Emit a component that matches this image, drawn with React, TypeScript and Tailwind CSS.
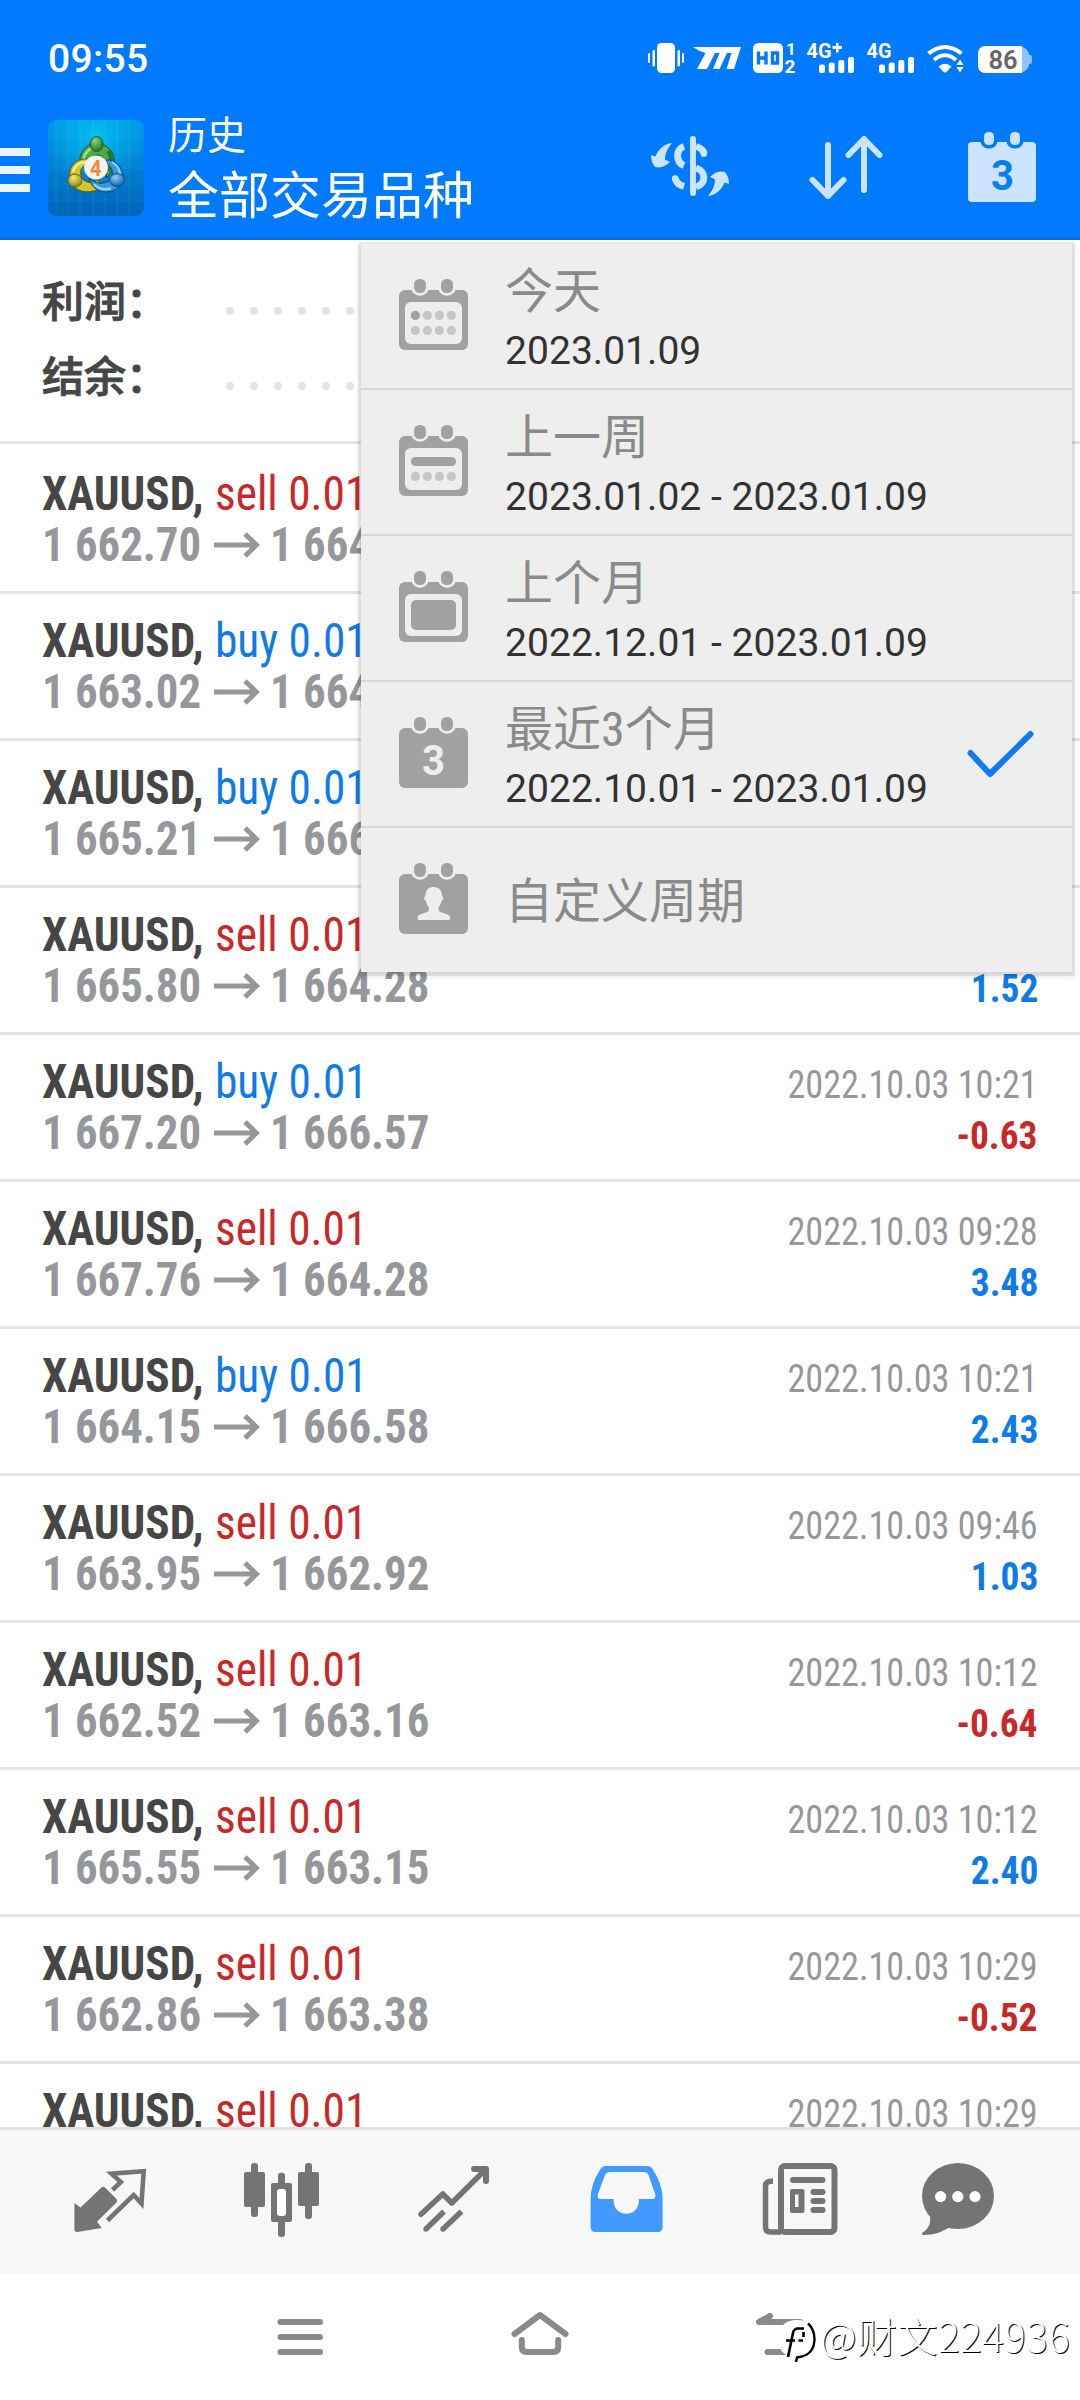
import React from "react";

const CJK = "font-[Roboto,'Noto_Sans_CJK_SC',sans-serif]";

type Trade = {
  side: "sell" | "buy";
  from?: string;
  to?: string;
  time?: string;
  profit?: string;
};

const trades: Trade[] = [
  { side: "sell", from: "1 662.70", to: "1 664" },
  { side: "buy", from: "1 663.02", to: "1 664" },
  { side: "buy", from: "1 665.21", to: "1 666" },
  { side: "sell", from: "1 665.80", to: "1 664.28", profit: "1.52" },
  { side: "buy", from: "1 667.20", to: "1 666.57", time: "2022.10.03 10:21", profit: "-0.63" },
  { side: "sell", from: "1 667.76", to: "1 664.28", time: "2022.10.03 09:28", profit: "3.48" },
  { side: "buy", from: "1 664.15", to: "1 666.58", time: "2022.10.03 10:21", profit: "2.43" },
  { side: "sell", from: "1 663.95", to: "1 662.92", time: "2022.10.03 09:46", profit: "1.03" },
  { side: "sell", from: "1 662.52", to: "1 663.16", time: "2022.10.03 10:12", profit: "-0.64" },
  { side: "sell", from: "1 665.55", to: "1 663.15", time: "2022.10.03 10:12", profit: "2.40" },
  { side: "sell", from: "1 662.86", to: "1 663.38", time: "2022.10.03 10:29", profit: "-0.52" },
  { side: "sell", time: "2022.10.03 10:29" },
];

function StatusBar() {
  return (
    <div className="flex h-[84px] items-start pl-12 pr-[45px]">
      <div className="mt-[36px] text-[39px] font-medium leading-[46px] tracking-[0.3px] text-white">09:55</div>
      <svg className="ml-auto mt-[34px] h-[48px] w-[390px]" viewBox="645 34 390 48" fill="#fff">
        <rect x="657" y="43" width="18" height="30" rx="4.5" />
        <rect x="648" y="53" width="2" height="10" rx="1" />
        <rect x="652.5" y="50" width="2.5" height="16.5" rx="1.2" />
        <rect x="677.5" y="50" width="2.5" height="16.5" rx="1.2" />
        <rect x="682" y="53" width="2" height="10" rx="1" />
        <path d="M693 47H741L734 69H726.5L731.5 53H727L719.5 69H713L719.5 53H715L707 69H697L705.5 53Q699 51.500 693 47Z" />
        <rect x="753" y="43" width="30" height="30" rx="5.500" />
        <g fill="none" stroke="#007aff" strokeWidth="3.400">
          <path d="M758.500 51.500V64.500M766 51.500V64.500M758.500 58H766M772.500 53V63H777.500V53Z" />
        </g>
        <g fontFamily="Roboto" fontWeight="700">
          <text x="786" y="55" fontSize="17">1</text>
          <text x="784.500" y="72.500" fontSize="17.500" textLength="11" lengthAdjust="spacingAndGlyphs">2</text>
          <text x="806.500" y="58" fontSize="21" textLength="25" lengthAdjust="spacingAndGlyphs">4G</text>
          <text x="866.500" y="58" fontSize="21" textLength="25" lengthAdjust="spacingAndGlyphs">4G</text>
        </g>
        <path d="M832.500 46H836V42.800H838.500V46H842V49H838.500V52.500H836V49H832.500Z" />
        {[0, 60].map((dx) => (
          <g key={dx}>
            <rect x={819 + dx} y="64.500" width="6" height="8.500" rx="2" />
            <rect x={828.7 + dx} y="62.500" width="6" height="10.500" rx="2" />
            <rect x={838.3 + dx} y="60" width="6" height="13" rx="2" />
            <rect x={848 + dx} y="57" width="6" height="16" rx="2" />
          </g>
        ))}
        <g fill="none" stroke="#fff" strokeWidth="4">
          <path d="M928.500 53.500Q945 40.500 961.500 53.500" />
          <path d="M934 60Q945 50.500 956 60" />
        </g>
        <path d="M938.500 66.500Q945 61 951.500 66.500L946.500 72Q945 73 943.500 72Z" />
        <path d="M960 59.500L963.500 65H956.500ZM960 72.500L963.500 67H956.500Z" />
        <path d="M1018 46A11 9 0 0 1 1029 55V64A11 9 0 0 1 1018 73Z" fill="#8cc4ff" />
        <path d="M1029 55H1030A2 2 0 0 1 1032 57V62A2 2 0 0 1 1030 64H1029Z" fill="#8cc4ff" />
        <path d="M1022 46V73H985A7 7 0 0 1 978 66V53A7 7 0 0 1 985 46Z" />
        <text x="988.500" y="69" fontFamily="Roboto" fontWeight="600" fontSize="25.500" fill="#666">86</text>
      </svg>
    </div>
  );
}

function AppLogo() {
  return (
    <svg className="ml-[18px] mt-9 h-24 w-24" viewBox="0 0 96 96">
      <defs>
        <linearGradient id="lg-bg" x1="0" y1="0" x2="0" y2="1">
          <stop offset="0" stopColor="#0096e6" />
          <stop offset="0.500" stopColor="#007fd2" />
          <stop offset="1" stopColor="#0063b8" />
        </linearGradient>
        <radialGradient id="lg-glow" cx="0.500" cy="0.150" r="0.550">
          <stop offset="0" stopColor="#00c0ee" />
          <stop offset="1" stopColor="#00b4f0" stopOpacity="0" />
        </radialGradient>
        <radialGradient id="lg-g" cx="0.400" cy="0.300" r="0.700">
          <stop offset="0" stopColor="#8fd47a" />
          <stop offset="1" stopColor="#1b7a26" />
        </radialGradient>
        <radialGradient id="lg-y" cx="0.400" cy="0.300" r="0.700">
          <stop offset="0" stopColor="#f3ea70" />
          <stop offset="1" stopColor="#94860f" />
        </radialGradient>
        <radialGradient id="lg-b" cx="0.400" cy="0.300" r="0.700">
          <stop offset="0" stopColor="#8fd0f5" />
          <stop offset="1" stopColor="#0b62b0" />
        </radialGradient>
      </defs>
      <rect width="96" height="96" rx="9" fill="url(#lg-bg)" />
      <rect width="96" height="96" rx="9" fill="url(#lg-glow)" />
      <path
        d="M8 0V96M20 0V96M32 0V96M45 0V96M57 0V96M69 0V96M81 0V96M0 16H96M0 32H96M0 48H96M0 64H96M0 80H96"
        stroke="#fff"
        strokeOpacity="0.080"
      />
      {/* three interlocking figures: green on top, yellow left, blue right */}
      <g stroke="#1c4a18" strokeWidth="1">
        <path d="M32 46C30 34 37 23.500 48.500 23.500C60 23.500 69 34 65 47C64 51 62 55 58 58C60 49 58 41 54 37C49 33 42 36 40 43Z" fill="#4fa845" />
      </g>
      <path d="M35 42C36 33 41 28 47 27.500" stroke="#a9dd8c" strokeWidth="2.500" fill="none" />
      <path d="M60 31C65 38 63 46 60 51" stroke="#217a28" strokeWidth="4" fill="none" />
      <path d="M22 58C20 47 28 38 40 39L38 45C33 47 31 52 34 58C38 64 45 63 50 60C54 66 52 70 46 71C34 74 24 69 22 58Z" fill="#d3c52c" stroke="#5d5610" />
      <path d="M25 52C27 45 32 42 38 42" stroke="#f7f08a" strokeWidth="2.500" fill="none" />
      <path d="M58 40C67 39 75 47 75 57C75 66 67 72 58 72C49 72 43 66 41 58C47 64 56 65 62 60C66 55 65 48 60 45Z" fill="#3a98d8" stroke="#0a437e" />
      <path d="M46 64C50 69 57 70 63 68.500" stroke="#8fd2f6" strokeWidth="2.500" fill="none" />
      <path d="M64 42C69 45 72 50 72 55" stroke="#8fd2f6" strokeWidth="2" fill="none" />
      <ellipse cx="48.500" cy="24" rx="6.500" ry="7.500" fill="url(#lg-g)" stroke="#1f5f20" />
      <ellipse cx="27" cy="60.500" rx="7" ry="6.500" fill="url(#lg-y)" stroke="#6a6112" />
      <ellipse cx="69" cy="60" rx="7.500" ry="6.500" fill="url(#lg-b)" stroke="#0c4a88" />
      <circle cx="48" cy="47.500" r="11.900" fill="#f4f2f2" />
      <text x="42" y="55.500" fontFamily="Roboto" fontWeight="700" fontSize="22" fill="#f08a3c" textLength="11.500" lengthAdjust="spacingAndGlyphs">
        4
      </text>
    </svg>
  );
}

function AppBar() {
  return (
    <div className="flex h-[153px] items-start">
      <svg className="mt-16 h-11 w-[30px]" viewBox="0 148 30 44" fill="#ebf5ff">
        <rect x="0" y="148" width="30" height="8" />
        <rect x="0" y="166" width="30" height="8" />
        <rect x="0" y="184" width="30" height="8" />
      </svg>
      <AppLogo />
      <div className="ml-6 mt-[29px] whitespace-nowrap text-white">
        <div className="text-[39px] leading-[46px]">历史</div>
        <div className="text-[51px] leading-[75px]">全部交易品种</div>
      </div>
      <svg
        className="ml-auto mr-[44px] mt-[40px] h-[84px] w-[386px]"
        viewBox="650 124 386 84"
        fill="none"
        stroke="#cce4ff"
        strokeWidth="6"
        strokeLinecap="round"
        strokeLinejoin="round"
      >
        <path d="M693 139V193" />
        <g strokeLinecap="butt" strokeWidth="7">
          <path d="M684 146.500C675.500 149 675.500 162 684 165.500" />
          <path d="M696 146.500C701 148 703.500 150 704 153.500" />
          <path d="M696 168C706.500 171 706.500 184 696 187" />
          <path d="M675.500 178.500C676 182 679 185 684 186.500" />
        </g>
        <circle cx="703.800" cy="153.800" r="3.300" fill="#cce4ff" stroke="none" />
        <circle cx="675.200" cy="178.500" r="3.300" fill="#cce4ff" stroke="none" />
        <g fill="#cce4ff" stroke="none">
          <path d="M672 143C664 144 658 149.500 655.500 156.500L651 155Q651 162 655 167Q663 169 670 162L665 159.500C665 154 667 149 672 143Z" />
          <path
            d="M672 143C664 144 658 149.500 655.500 156.500L651 155Q651 162 655 167Q663 169 670 162L665 159.500C665 154 667 149 672 143Z"
            transform="rotate(180 690 169.500)"
          />
        </g>
        <path d="M828 145V195M812.500 180L828 196L843.500 180" />
        <path d="M864 190V140M848.500 155L864 139L879.500 155" />
        <rect x="968" y="142" width="68" height="60" rx="4" fill="#cce4ff" stroke="none" />
        <rect x="984" y="132" width="10" height="13" rx="4.500" fill="#cce4ff" stroke="#007aff" strokeWidth="7" paintOrder="stroke" />
        <rect x="1010" y="132" width="10" height="13" rx="4.500" fill="#cce4ff" stroke="#007aff" strokeWidth="7" paintOrder="stroke" />
        <text x="991" y="189.500" fontFamily="Roboto" fontWeight="700" fontSize="43" fill="#0b7ef5" stroke="none" textLength="23" lengthAdjust="spacingAndGlyphs">
          3
        </text>
      </svg>
    </div>
  );
}

function Summary() {
  return (
    <div className="h-[204px] shrink-0 border-b-[3px] border-[#e4e4e4] pt-[25px]">
      {["利润：", "结余："].map((label) => (
        <div key={label} className="flex h-[75px] pl-[42px] text-[42px] font-medium leading-[75px] text-[#464646]">
          <span className="w-[184px] whitespace-nowrap [-webkit-text-stroke:0.9px_#464646]">{label}</span>
          <span className="mt-[42px] flex gap-[16.500px]">
            {Array.from({ length: 6 }, (_, i) => (
              <i key={i} className="block size-[7.500px] rounded-full bg-[#e4e4e4]" />
            ))}
          </span>
        </div>
      ))}
    </div>
  );
}

function TradeRow({ t }: { t: Trade }) {
  const tone = t.side === "sell" ? "text-[#c82828]" : "text-[#0f7bea]";
  return (
    <div className="flex h-[147px] shrink-0 justify-between border-b-[3px] border-[#e4e4e4] pl-[42px] pr-[42px] pt-[23px] font-[Roboto] whitespace-pre [font-stretch:75%]">
      <div className="text-[48px]">
        <div className="flex leading-[48px]">
          <span className="w-[173px] origin-left scale-x-[0.94] font-bold text-[#464646]">XAUUSD,</span>
          <span className={`origin-left scale-x-[0.945] ${tone}`}>{t.side} 0.01</span>
        </div>
        {t.from && (
          <div className="flex items-start font-bold leading-[53px] text-[#96979b]">
            <span className="w-[160px] origin-left scale-x-[0.933]">{t.from}</span>
            <svg className="ml-3 mt-[13px] h-7 w-[46px]" viewBox="0 0 46 28" fill="none" stroke="#96979b" strokeWidth="5">
              <path d="M0 14H42M31 3L42.500 14L31 25" />
            </svg>
            <span className="ml-[10px] origin-left scale-x-[0.935]">{t.to}</span>
          </div>
        )}
      </div>
      <div className="flex flex-col items-end pt-px text-[39px]">
        <div className="h-[53px] origin-right scale-x-[0.928] leading-[53px] text-[#96979b]">{t.time}</div>
        {t.profit && (
          <div className={`origin-right scale-x-[0.96] font-bold leading-[49px] ${t.profit.startsWith("-") ? "text-[#c82828]" : "text-[#0f7bea]"}`}>
            {t.profit}
          </div>
        )}
      </div>
    </div>
  );
}

type Kind = "today" | "week" | "month" | "three" | "custom";

function CalendarIcon({ kind }: { kind: Kind }) {
  return (
    <svg className="mt-8 h-[78px] w-[69px] shrink-0" viewBox="0 -3 69 78" fill="#a1a1a1">
      <rect x="0" y="11" width="69" height="60" rx="6" />
      <rect x="15" y="0" width="12" height="14" rx="5.500" stroke="#eee" strokeWidth="5.500" paintOrder="stroke" />
      <rect x="42" y="0" width="12" height="14" rx="5.500" stroke="#eee" strokeWidth="5.500" paintOrder="stroke" />
      {(kind === "today" || kind === "week" || kind === "month") && <rect x="6" y="23" width="57" height="42" rx="6" fill="#eee" />}
      {kind === "today" &&
        [0, 1, 2, 3].map((i) => <circle key={i} cx={16.4 + 12 * i} cy="36.400" r="4.600" fill={i ? "#c6c6c6" : "#a1a1a1"} />)}
      {kind === "week" && <rect x="12" y="32" width="45" height="9" rx="4.500" />}
      {(kind === "today" || kind === "week") &&
        [0, 1, 2, 3].map((i) => <circle key={i} cx={16.4 + 12 * i} cy="51.400" r="4.600" fill="#c6c6c6" />)}
      {kind === "month" && <rect x="12" y="29" width="45" height="30" rx="5" />}
      {kind === "three" && (
        <text x="23" y="57.500" fontFamily="Roboto" fontWeight="700" fontSize="43" fill="#eee" textLength="23" lengthAdjust="spacingAndGlyphs">
          3
        </text>
      )}
      {kind === "custom" && (
        <path
          fill="#eee"
          d="M34.500 24C40.500 24 43 28 43 33C45 34 44.500 37 42.500 38C42 41 40.500 43 39.500 44.500V47C40.500 50.500 51 50 51 54.500V56Q51 57 50 57H20Q18.500 57 18.500 56V54.500C18.500 50 29 50.500 30 47V44.500C28.500 43 27.500 41 27 38C25 37 24.500 34 26.500 33C26.500 28 28.500 24 34.500 24Z"
        />
      )}
    </svg>
  );
}

const periods: { kind: Kind; title: string; range?: string; checked?: boolean }[] = [
  { kind: "today", title: "今天", range: "2023.01.09" },
  { kind: "week", title: "上一周", range: "2023.01.02 - 2023.01.09" },
  { kind: "month", title: "上个月", range: "2022.12.01 - 2023.01.09" },
  { kind: "three", title: "最近3个月", range: "2022.10.01 - 2023.01.09", checked: true },
  { kind: "custom", title: "自定义周期" },
];

function PeriodMenu() {
  return (
    <div className="absolute left-[361px] top-[244px] w-[711px] bg-[#eee] shadow-[0_1px_0_3px_rgba(0,0,0,0.07),0_3px_6px_2px_rgba(0,0,0,0.1)]">
      {periods.map((p, i) => (
        <div key={p.kind} className={`flex pl-[38px] ${i < 4 ? "h-[146px] border-b-2 border-[#d6d6d6]" : "h-[144px]"}`}>
          <CalendarIcon kind={p.kind} />
          <div className={`ml-[37px] whitespace-nowrap ${p.range ? "pt-3" : "pt-[38px]"}`}>
            <div className="text-[48px] leading-[72px] text-[#8a8a8a] [font-stretch:75%]">{p.title}</div>
            {p.range && <div className="text-[39px] leading-[47px] tracking-[0.04px] text-[#323232]">{p.range}</div>}
          </div>
          {p.checked && (
            <svg className="ml-auto mr-[38px] mt-[46px] h-[52px] w-[68px]" viewBox="966 728 68 52" fill="none" stroke="#0f7bf3" strokeWidth="6" strokeLinecap="round" strokeLinejoin="round">
              <path d="M970.500 753L990 774L1030.500 734" />
            </svg>
          )}
        </div>
      ))}
    </div>
  );
}

function TabBar() {
  const cls = "h-[144px] w-[172px]";
  return (
    <div className="flex h-[147px] border-t-[3px] border-[#e2e2e2] bg-[#f7f7f7] px-6">
      <svg className={cls} viewBox="24 2130 172 144" fill="#747474">
        <path d="M74.400 2203L80.500 2207.500L101.500 2187.500Q103.200 2186 105 2187.500L116.500 2199Q118 2201 116.500 2202.500L97 2221.700L101.800 2228L77 2232Q74.400 2232 74.400 2229Z" />
        <path d="M107.500 2220.500L133.600 2195L141.500 2203.500L143.700 2171.300L111.500 2173.700L120.800 2182L112.500 2190" fill="none" stroke="#747474" strokeWidth="4.600" />
      </svg>
      <svg className={cls} viewBox="196 2130 172 144" fill="#747474">
        <rect x="244" y="2172" width="21" height="35" rx="2" />
        <rect x="251" y="2163" width="7" height="54" rx="3" />
        <rect x="278" y="2172.700" width="7" height="64.300" rx="3" />
        <rect x="271" y="2183" width="21" height="39" rx="2" />
        <rect x="277" y="2189" width="9" height="27" rx="3" fill="#fff" />
        <rect x="298" y="2172" width="21" height="34" rx="2" />
        <rect x="305" y="2163" width="7" height="56" rx="3" />
      </svg>
      <svg className={cls} viewBox="368 2130 172 144" fill="none" stroke="#747474" strokeWidth="5.500" strokeLinejoin="round">
        <path d="M421 2214.300L442.800 2194L451.800 2203L485 2170" strokeLinecap="round" />
        <path d="M474 2169H486V2181" strokeLinecap="round" strokeWidth="6" />
        <path d="M426 2229L444 2211.500M443 2229L461.500 2211.500" />
        <circle cx="426" cy="2229" r="2.700" fill="#747474" stroke="none" />
        <circle cx="443" cy="2229" r="2.700" fill="#747474" stroke="none" />
      </svg>
      <svg className={cls} viewBox="540 2130 172 144">
        <path
          fill="#419bff"
          fillRule="evenodd"
          d="M606 2166H647Q650.500 2166 652.500 2169Q662.600 2184 662.600 2199V2227Q662.600 2232 657.600 2232H595.600Q590.600 2232 590.600 2227V2199Q590.600 2184 600.500 2169Q602.500 2166 606 2166ZM610 2172Q606.500 2172 605 2175L598 2194Q596.500 2199 601 2199H613.700V2201C613.700 2218 638.800 2218 638.800 2201V2199H652Q656.500 2199 655.200 2194L648.500 2175Q647 2172 643.500 2172Z"
        />
      </svg>
      <svg className={cls} viewBox="712 2130 172 144" fill="#747474">
        <rect x="781" y="2166" width="53.500" height="66" rx="4" fill="none" stroke="#747474" strokeWidth="6" />
        <path d="M773 2181Q765.500 2181 765.500 2186V2227Q765.500 2232 770.500 2232H781" fill="none" stroke="#747474" strokeWidth="5.500" />
        <rect x="790" y="2177" width="35.500" height="6" rx="3" />
        <path fillRule="evenodd" d="M792 2189H802.500Q804.500 2189 804.500 2191V2211Q804.500 2213 802.500 2213H792Q790 2213 790 2211V2191Q790 2189 792 2189ZM795 2194.500V2207H798.500V2194.500Z" />
        <rect x="810.500" y="2189" width="15" height="6" rx="3" />
        <rect x="810.500" y="2198" width="15" height="6" rx="3" />
        <rect x="810.500" y="2207" width="15" height="6" rx="3" />
      </svg>
      <svg className={cls} viewBox="884 2130 172 144" fill="#747474">
        <ellipse cx="958" cy="2196" rx="36" ry="33" />
        <path d="M930 2216C931 2225 928 2229 922.500 2232.500Q921 2235 924 2235C934 2235 942 2232 950 2227Z" />
        <g fill="#fff">
          <circle cx="940.600" cy="2196.600" r="5.600" />
          <circle cx="957.800" cy="2196.600" r="5.600" />
          <circle cx="975" cy="2196.600" r="5.600" />
        </g>
      </svg>
    </div>
  );
}

function NavBar() {
  return (
    <div className="relative h-[126px] bg-white">
      <div className="grid h-full grid-cols-3 px-[60px]">
        <svg className="h-[126px] w-[320px]" viewBox="60 2274 320 126" stroke="#8a8a8a" strokeWidth="6" strokeLinecap="round">
          <path d="M280.500 2322H320M280.500 2337H320M280.500 2352H320" />
        </svg>
        <svg className="h-[126px] w-[320px]" viewBox="380 2274 320 126" fill="none" stroke="#8a8a8a" strokeWidth="6" strokeLinecap="round" strokeLinejoin="round">
          <path d="M514.500 2334L540 2315L565.500 2334M521.800 2340V2347Q521.800 2352 527 2352H553Q558.200 2352 558.200 2347V2340" />
        </svg>
        <svg className="h-[126px] w-[320px]" viewBox="700 2274 320 126" fill="none" stroke="#8a8a8a" strokeWidth="6" strokeLinecap="round" strokeLinejoin="round">
          <path d="M770 2316L759 2322H800M767.500 2352H796" />
          <path d="M758 2322L771 2315V2322Z" fill="#8a8a8a" stroke="none" />
        </svg>
      </div>
      <div className="absolute left-[778px] top-[38px] flex items-start whitespace-nowrap">
        <svg className="mt-[2px] h-[52px] w-[42px]" viewBox="778 2314 42 52" fill="none">
          <path d="M797 2320C809 2320 814 2328 814 2338C814 2351 807 2356 796 2362L797 2357C783 2357 778 2349 778 2338C778 2327 785 2320 797 2320Z" fill="#fff" />
          <path d="M808 2323.500C814 2329 816 2338 813.500 2346C811 2354 803 2357 797 2357.500L796 2362" stroke="#000" strokeWidth="2.400" />
          <path d="M804 2328.500H798Q794 2328.500 793 2333L788 2357M786 2340.500H795M798.500 2340.500H803M803.500 2332V2337" stroke="#000" strokeWidth="2.600" />
        </svg>
        <span className="-mt-[2px] font-['Noto_Sans_CJK_SC',sans-serif] text-[40px] font-light leading-[50px] tracking-[0.6px] text-white [text-shadow:1px_1px_0_#000]">@财文224936</span>
      </div>
    </div>
  );
}

export default function App() {
  return (
    <div className={`relative flex h-[2400px] w-[1080px] flex-col overflow-hidden bg-white ${CJK}`}>
      <header className="h-[240px] shrink-0 border-b-[3px] border-[#0a6fe0] bg-[#007aff]">
        <StatusBar />
        <AppBar />
      </header>
      <main className="flex h-[1887px] shrink-0 flex-col overflow-hidden">
        <Summary />
        <div className="flex flex-col pt-[3px]">
          {trades.map((t, i) => (
            <TradeRow key={i} t={t} />
          ))}
        </div>
      </main>
      <TabBar />
      <NavBar />
      <PeriodMenu />
    </div>
  );
}
